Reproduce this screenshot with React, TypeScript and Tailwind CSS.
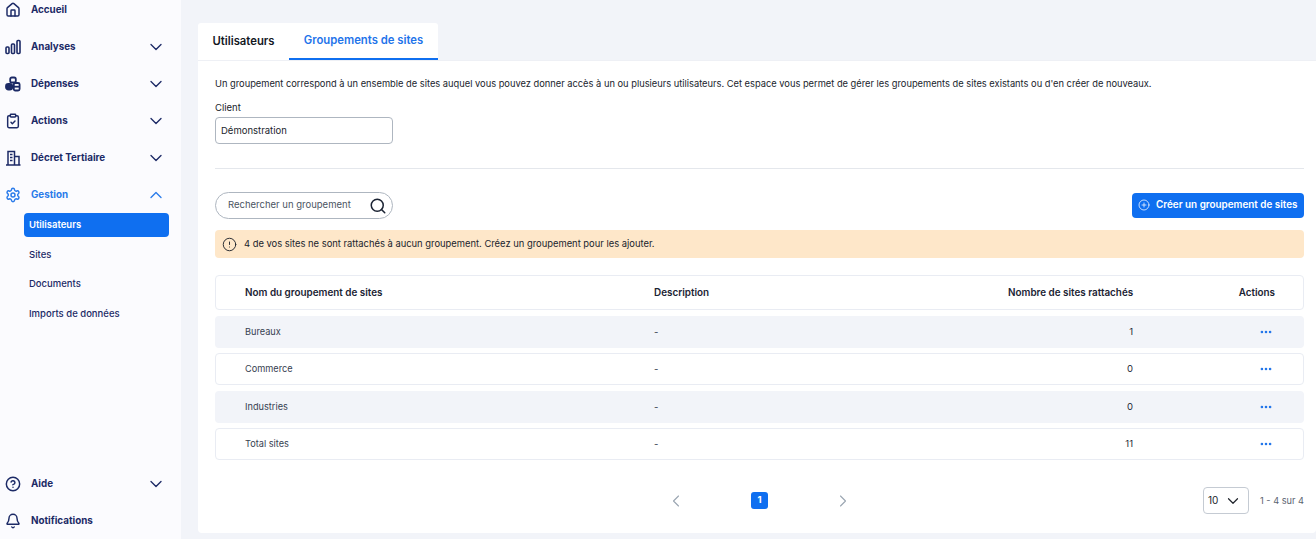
import { Home, ChevronDown, ChevronUp, ChevronLeft, ChevronRight, ClipboardCheck, Settings, CircleHelp, Bell, Search, CirclePlus, CircleAlert, Ellipsis } from "lucide-react";

type IconProps = { className?: string; strokeWidth?: number };

function Coins({ className }: IconProps) {
  return (
    <svg className={className} viewBox="0 0 16 16" fill="none" stroke="currentColor" strokeWidth="1.8">
      <rect x="5.2" y="1.5" width="5.6" height="5" rx="1.6" />
      <rect x="1" y="8" width="6.2" height="5.6" rx="2.4" fill="currentColor" />
      <rect x="8.8" y="7" width="5.8" height="7.5" rx="1.5" />
      <path d="M9 10.7h5.5" />
    </svg>
  );
}

function Bars({ className }: IconProps) {
  return (
    <svg className={className} viewBox="0 0 16 16" fill="none" stroke="currentColor" strokeWidth="1.6">
      <rect x="1" y="8" width="3" height="6.5" rx="1" />
      <rect x="6.5" y="5" width="3" height="9.5" rx="1" />
      <rect x="12" y="1.5" width="3" height="13" rx="1" />
    </svg>
  );
}

function Tower({ className }: IconProps) {
  return (
    <svg className={className} viewBox="0 0 16 16" fill="none" stroke="currentColor" strokeWidth="1.5">
      <path d="M1 15h14.5" />
      <path d="M3 15V1.5h6.5V15" />
      <path d="M9.5 6.5h4.5V15" />
      <path d="M5 4.5h2.5M5 7.5h2.5M5 10.5h2.5M11.5 9.5v.01M11.5 12.5v.01" />
    </svg>
  );
}

const nav = [
  { label: "Analyses", Icon: Bars },
  { label: "Dépenses", Icon: Coins },
  { label: "Actions", Icon: ClipboardCheck },
  { label: "Décret Tertiaire", Icon: Tower },
];

function NavRow({ label, Icon, chevron = true, active = false }: { label: string; Icon: any; chevron?: boolean; active?: boolean }) {
  return (
    <div className={`flex h-[37px] items-center pl-[5px] pr-[15px] ${active ? "text-[#2a7bea]" : "text-[#1c2a66]"}`}>
      <Icon className="h-[16px] w-[16px] shrink-0" strokeWidth={2.2} />
      <span className="ml-[10px] flex-1 pt-[2px] text-[9.8px] font-bold">{label}</span>
      {chevron && (active ? <ChevronUp className="h-[20px] w-[20px]" strokeWidth={1.6} /> : <ChevronDown className="h-[20px] w-[20px]" strokeWidth={1.6} />)}
    </div>
  );
}

const rows = [
  { name: "Bureaux", n: "1", striped: true, gap: "mt-0" },
  { name: "Commerce", n: "0", striped: false, gap: "mt-[5px]" },
  { name: "Industries", n: "0", striped: true, gap: "mt-[6px]" },
  { name: "Total sites", n: "11", striped: false, gap: "mt-[5px]" },
];

export default function App() {
  return (
    <div className="flex h-[539px] w-[1316px] overflow-hidden bg-[#f2f4f9] font-['Inter',sans-serif]">
      <aside className="flex h-full w-[181px] shrink-0 flex-col justify-between bg-[#fbfbfe]">
        <div className="-mt-[9px]">
          <NavRow label="Accueil" Icon={Home} chevron={false} />
          {nav.map((n) => (
            <NavRow key={n.label} label={n.label} Icon={n.Icon} />
          ))}
          <NavRow label="Gestion" Icon={Settings} active />
          <div className="flex flex-col pl-[24px] pr-[12px] text-[9.5px] font-medium text-[#1c2a66]">
            <div className="flex h-[24px] items-center rounded-[4px] bg-[#0f6ff0] pl-[5px] font-semibold text-white">Utilisateurs</div>
            <div className="mt-[3px] flex h-[29.5px] items-center pl-[5px]">Sites</div>
            <div className="flex h-[29.5px] items-center pl-[5px]">Documents</div>
            <div className="flex h-[29.5px] items-center pl-[5px]">Imports de données</div>
          </div>
        </div>
        <div>
          <NavRow label="Aide" Icon={CircleHelp} />
          <NavRow label="Notifications" Icon={Bell} chevron={false} />
        </div>
      </aside>

      <main className="flex min-w-0 flex-1 flex-col pl-[17px] pt-[23px] pb-[6px]">
        <div className="flex h-[37px] w-[240px] rounded-t-[3px] bg-white">
          <div className="flex w-[91px] items-center justify-center pb-[1px] text-[11.3px] font-semibold text-[#14181f]">Utilisateurs</div>
          <div className="flex flex-1 items-center justify-center border-b-2 border-[#0f6ff0] text-[11.3px] font-semibold text-[#1f74ea]">Groupements de sites</div>
        </div>
        <div className="flex flex-1 flex-col rounded-b-[4px] border-t border-[#eef0f5] bg-white pl-[17px] pr-[12px]">
          <p className="mt-[17px] text-[9.31px] leading-[12px] text-[#20242c]">
            Un groupement correspond à un ensemble de sites auquel vous pouvez donner accès à un ou plusieurs utilisateurs. Cet espace vous permet de gérer les groupements de sites existants ou d'en créer de nouveaux.
          </p>
          <div className="mt-[12px] text-[9.5px] leading-[12px] text-[#20242c]">Client</div>
          <div className="mt-[3px] flex h-[27px] w-[178px] items-center rounded-[4px] border border-[#aeb6c0] px-[5px] pt-[1px] text-[9.5px] text-[#20242c]">Démonstration</div>
          <div className="mt-[24px] h-px bg-[#e4e7ec]" />

          <div className="mt-[23px] flex items-center justify-between">
            <div className="flex h-[27px] w-[178px] items-center justify-between rounded-full border border-[#aeb6c0] pl-[12px] pr-[5px] text-[9.5px] text-[#4b5563]">
              <span>Rechercher un groupement</span>
              <Search className="h-[18px] w-[18px] text-[#1b2333]" strokeWidth={2} />
            </div>
            <button className="flex h-[25px] w-[172px] items-center rounded-[4px] bg-[#0f6ff0] pb-[2px] pl-[6px] text-[9.9px] font-semibold text-white">
              <CirclePlus className="h-[12px] w-[12px]" strokeWidth={1.5} />
              <span className="ml-[6px]">Créer un groupement de sites</span>
            </button>
          </div>

          <div className="mt-[11px] flex h-[28px] items-center rounded-[4px] bg-[#fee7c9] pl-[7px] text-[9.4px] text-[#20242c]">
            <CircleAlert className="h-[15px] w-[15px]" strokeWidth={1.5} />
            <span className="ml-[7px]">4 de vos sites ne sont rattachés à aucun groupement. Créez un groupement pour les ajouter.</span>
          </div>

          <div className="mt-[17px] flex h-[35px] items-center rounded-[4px] border border-[#e9ecf3] text-[9.9px] font-semibold text-[#1b2333]">
            <span className="w-[438px] shrink-0 pl-[29px]">Nom du groupement de sites</span>
            <span className="w-[354px] shrink-0">Description</span>
            <span className="shrink-0">Nombre de sites rattachés</span>
            <span className="flex-1 pr-[28px] text-right">Actions</span>
          </div>

          <div className="mt-[6px] flex flex-col">
            {rows.map((r) => (
              <div key={r.name} className={`flex h-[32px] items-center rounded-[4px] border ${r.gap} ${r.striped ? "border-transparent bg-[#f2f4f9]" : "border-[#e9ecf3]"}`}>
                <span className="w-[438px] shrink-0 pl-[29px] text-[9.2px] text-[#374151]">{r.name}</span>
                <span className="w-[400px] shrink-0 text-[9.5px] text-[#374151]">-</span>
                <span className="w-[79px] shrink-0 text-right text-[9.5px] text-[#1f2937]">{r.n}</span>
                <span className="flex flex-1 justify-end pr-[30px]">
                  <Ellipsis className="h-[14px] w-[14px] text-[#1f74ea]" strokeWidth={2.5} />
                </span>
              </div>
            ))}
          </div>

          <div className="mt-[26px] flex items-center pt-[1px]">
            <ChevronLeft className="ml-[451px] h-[20px] w-[20px] text-[#9aa5b1]" strokeWidth={1.3} />
            <span className="ml-[65px] flex h-[17px] w-[17px] items-center justify-center rounded-[3px] bg-[#0f6ff0] text-[9.5px] font-bold text-white">1</span>
            <ChevronRight className="ml-[65px] h-[20px] w-[20px] text-[#9aa5b1]" strokeWidth={1.3} />
            <div className="ml-[350px] flex h-[27px] w-[46px] items-center justify-between rounded-[4px] border border-[#c5cbd3] pl-[4px] pr-[6px] text-[10px] text-[#20242c]">
              <span>10</span>
              <ChevronDown className="h-[18px] w-[18px]" strokeWidth={1.6} />
            </div>
            <span className="ml-[11px] text-[9.2px] text-[#5b6470]">1 - 4 sur 4</span>
          </div>
        </div>
      </main>
    </div>
  );
}
